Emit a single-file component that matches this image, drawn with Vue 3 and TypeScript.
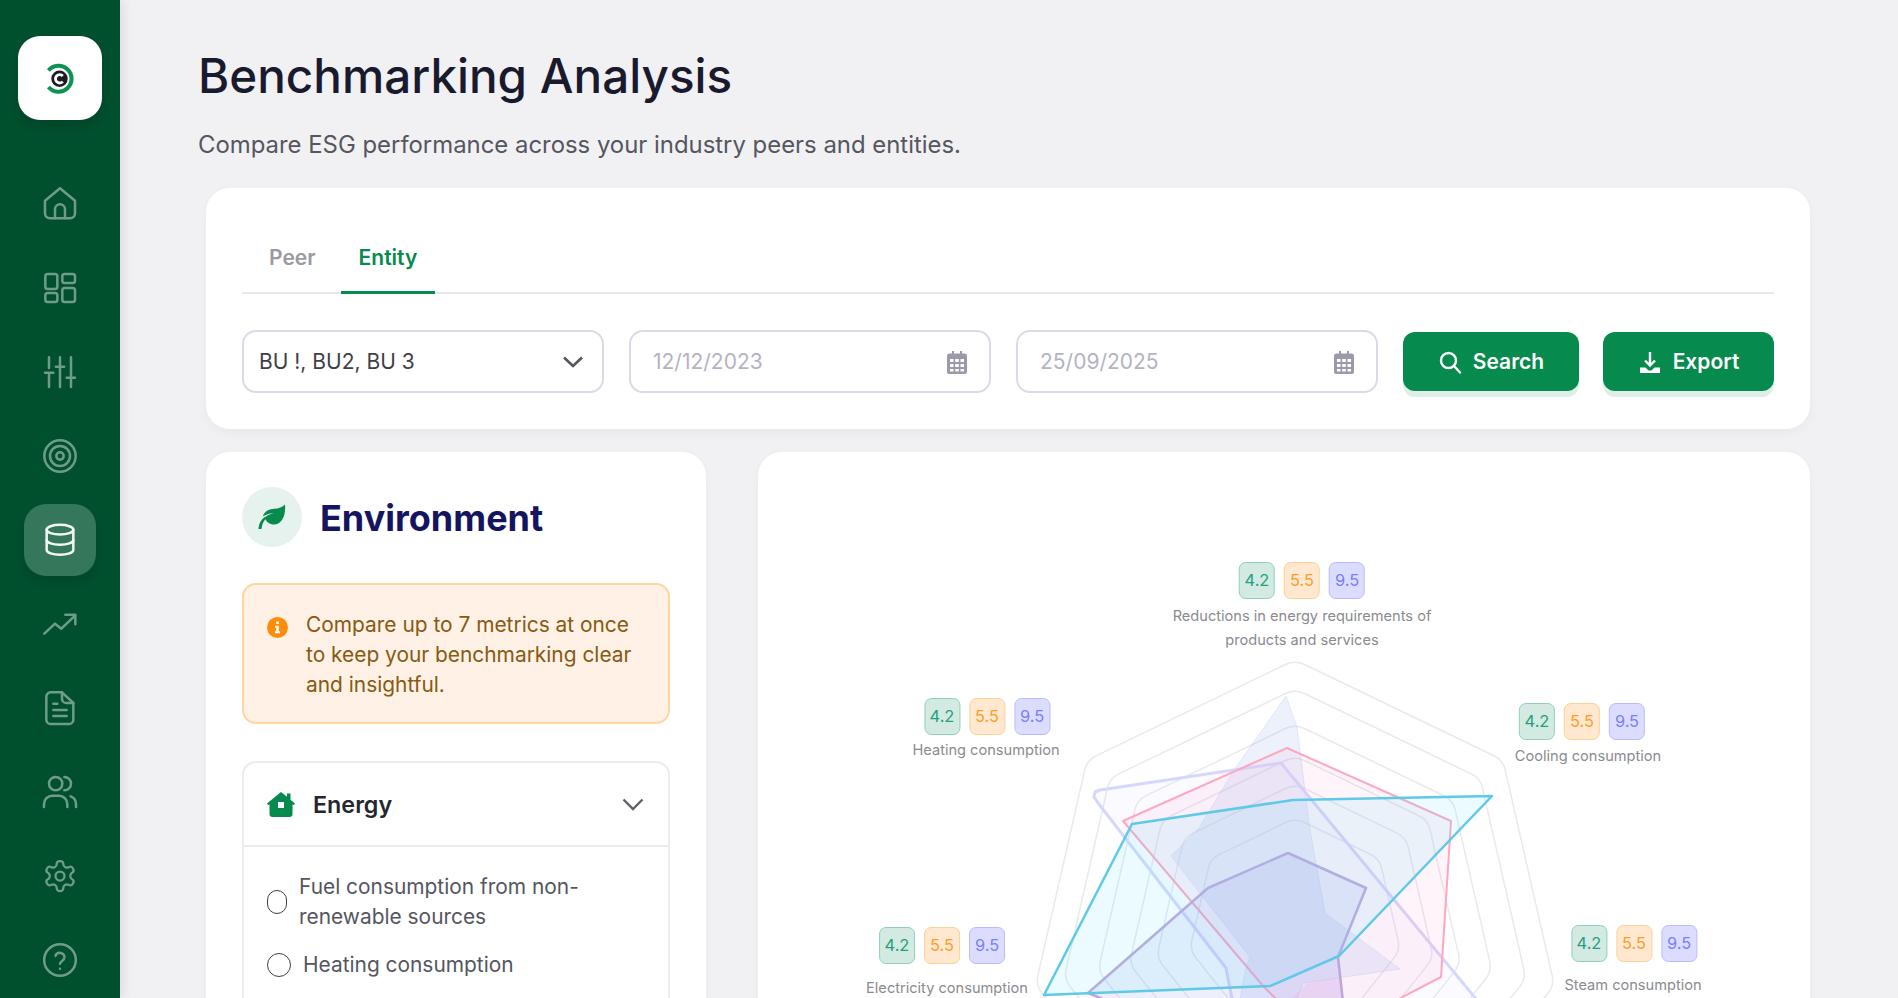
<script setup lang="ts">
interface NavItem {
  id: string
  active?: boolean
  shapes: string
}

const navItems: NavItem[] = [
  { id: 'home', shapes: '<path d="M3 10 12 2.600 21 10v7.600a3 3 0 0 1-3 3H6a3 3 0 0 1-3-3z"/><path d="M9 20.600v-5.400a3 3 0 0 1 6 0v5.400"/>' },
  { id: 'grid', shapes: '<rect x="3.2" y="3.600" width="7.200" height="9" rx="1.400"/><rect x="13.400" y="3.600" width="7.600" height="5.400" rx="1.400"/><rect x="3.200" y="15" width="7.200" height="5.400" rx="1.400"/><rect x="13.400" y="12" width="7.600" height="8.400" rx="1.400"/>' },
  { id: 'sliders', shapes: '<path d="M5.400 3.200v6.400M5.400 12.400V21M12 3.200V8.400M12 8.800V21M18.600 3.200V15.200M18.600 15.400V21M3 12.400h5M9.500 8.800h5M16 15.400h5"/>' },
  { id: 'target', shapes: '<circle cx="12" cy="12" r="9.400"/><circle cx="12" cy="12" r="6"/><circle cx="12" cy="12" r="2.200"/>' },
  { id: 'database', active: true, shapes: '<ellipse cx="12" cy="5.800" rx="8" ry="2.900"/><path d="M4 5.800V18c0 1.600 3.600 2.900 8 2.900s8-1.300 8-2.900V5.800"/><path d="M4 12c0 1.600 3.600 2.900 8 2.900s8-1.300 8-2.900"/>' },
  { id: 'trend', shapes: '<path d="M2.600 17.800 9 11.800l3.800 3L21 7"/><path d="M15.200 6.400h6v5.800"/>' },
  { id: 'doc', shapes: '<path d="M6.400 2.600h6.800L20 9v10a2.600 2.600 0 0 1-2.600 2.600H6.400A2.600 2.600 0 0 1 3.800 19V5.200a2.600 2.600 0 0 1 2.600-2.600z"/><path d="M13.200 2.600v3.800A2.600 2.600 0 0 0 15.800 9H20M8 9.400h2.400M8 13.200h8M8 16.800h8"/>' },
  { id: 'users', shapes: '<circle cx="9.400" cy="7" r="4"/><path d="M2.400 21v-1.800a5 5 0 0 1 5-5h4a5 5 0 0 1 5 5V21"/><path d="M14.600 3a4 4 0 0 1 0 8M18.400 14.600a5 5 0 0 1 3.200 4.600V21"/>' },
  { id: 'gear', shapes: '<g transform="translate(1.200 1.200) scale(.9)"><path d="M12.220 2h-.44a2 2 0 0 0-2 2v.18a2 2 0 0 1-1 1.730l-.43.25a2 2 0 0 1-2 0l-.15-.08a2 2 0 0 0-2.730.73l-.22.38a2 2 0 0 0 .73 2.730l.15.1a2 2 0 0 1 1 1.720v.51a2 2 0 0 1-1 1.740l-.15.09a2 2 0 0 0-.73 2.730l.22.38a2 2 0 0 0 2.730.73l.15-.08a2 2 0 0 1 2 0l.43.25a2 2 0 0 1 1 1.730V20a2 2 0 0 0 2 2h.44a2 2 0 0 0 2-2v-.18a2 2 0 0 1 1-1.730l.43-.25a2 2 0 0 1 2 0l.15.08a2 2 0 0 0 2.730-.73l.22-.39a2 2 0 0 0-.73-2.730l-.15-.08a2 2 0 0 1-1-1.740v-.5a2 2 0 0 1 1-1.740l.15-.09a2 2 0 0 0 .73-2.730l-.22-.38a2 2 0 0 0-2.730-.73l-.15.08a2 2 0 0 1-2 0l-.43-.25a2 2 0 0 1-1-1.730V4a2 2 0 0 0-2-2z"/><circle cx="12" cy="12" r="3"/></g>' },
  { id: 'help', shapes: '<circle cx="12" cy="12" r="9.500"/><path d="M9.300 9.500a2.800 2.800 0 0 1 5.400 1c0 1.800-2.700 2.300-2.700 3.800"/><path d="M12 17.200v.1"/>' },
]

interface RadarLabel {
  id: string
  lines: string[]
  x: number
  y: number
  gap: number
  shift?: number
}

// offsets are relative to the chart card, they are the nodes' place on the diagram
const labels: RadarLabel[] = [
  { id: 'top', lines: ['Reductions in energy requirements of', 'products and services'], x: 544, y: 110, gap: 5 },
  { id: 'heat', lines: ['Heating consumption'], x: 228, y: 246, gap: 3, shift: 1 },
  { id: 'cool', lines: ['Cooling consumption'], x: 830, y: 251, gap: 4, shift: -6 },
  { id: 'elec', lines: ['Electricity consumption'], x: 189, y: 475, gap: 12, shift: -5 },
  { id: 'steam', lines: ['Steam consumption'], x: 875, y: 473, gap: 11, shift: 1 },
]
const scores = [
  { value: '4.2', tone: 'green' },
  { value: '5.5', tone: 'orange' },
  { value: '9.5', tone: 'violet' },
]

const cx = 537
const cy = 474
const ringRadii = [266, 237, 202, 170, 142, 108]
const cornerCut = 10

function ringPath(r: number): string {
  const corners = Array.from({ length: 7 }, (_, i) => {
    const a = (i * 2 * Math.PI) / 7
    return [cx + r * Math.sin(a), cy - r * Math.cos(a)]
  })
  const t = cornerCut / (2 * r * Math.sin(Math.PI / 7))
  let d = ''
  corners.forEach((p, i) => {
    const prev = corners[(i + 6) % 7]
    const next = corners[(i + 1) % 7]
    const a = [p[0] + (prev[0] - p[0]) * t, p[1] + (prev[1] - p[1]) * t]
    const b = [p[0] + (next[0] - p[0]) * t, p[1] + (next[1] - p[1]) * t]
    d += `${i === 0 ? 'M' : 'L'}${a[0].toFixed(1)} ${a[1].toFixed(1)}Q${p[0].toFixed(1)} ${p[1].toFixed(1)} ${b[0].toFixed(1)} ${b[1].toFixed(1)}`
  })
  return d + 'Z'
}

const rings = ringRadii.map(ringPath)

// series given in page coordinates, shifted into the card
function pts(list: number[][]): string {
  return list.map(([x, y]) => `${x - 758},${y - 452}`).join(' ')
}

const series = [
  { id: 'blue', points: pts([[1286, 696], [1297, 727], [1310, 830], [1325, 913], [1400, 969], [1303, 983], [1293, 1010], [1238, 1010], [1246, 967], [1250, 957], [1171, 856], [1199, 828], [1234, 770]]), fill: 'rgba(150, 180, 240, 0.18)', stroke: 'rgba(190, 210, 245, 0.4)', width: 1 },
  { id: 'magenta', points: pts([[1307, 983], [1341, 977], [1344, 1010], [1280, 1010]]), fill: 'rgba(250, 190, 240, 0.3)', stroke: 'none', width: 0 },
  { id: 'peri', points: pts([[1281, 763], [1100, 790], [1095, 792], [1094, 797], [1098, 803], [1226, 968], [1240, 1040], [1510, 1040]]), fill: 'rgba(200, 200, 255, 0.08)', stroke: '#d5d7ff', width: 3 },
  { id: 'pink', points: pts([[1287, 748], [1451, 821], [1441, 977], [1370, 1014], [1300, 1022], [1264, 987], [1123, 821]]), fill: 'rgba(255, 130, 190, 0.09)', stroke: '#ffa6c0', width: 2 },
  { id: 'purple', points: pts([[1288, 853], [1366, 888], [1338, 957], [1345, 1020], [1130, 1010], [1088, 993], [1208, 888]]), fill: 'rgba(125, 130, 235, 0.13)', stroke: '#bda6da', width: 2.5 },
  { id: 'cyan', points: pts([[1293, 800], [1492, 796], [1339, 956], [1270, 986], [1044, 995], [1132, 824]]), fill: 'rgba(110, 225, 255, 0.14)', stroke: '#5fc9e8', width: 2.5 },
]
</script>

<template>
  <div class="page">
    <aside class="sidebar">
      <div class="logo">
        <svg width="36" height="36" viewBox="0 0 36 36" fill="none">
          <path d="M6.500 10.500A13 13 0 1 1 6.500 27" stroke="#0b9354" stroke-width="4" />
          <circle cx="17.500" cy="18.800" r="8.200" fill="#1b1b22" />
          <path d="M20.800 16a4.200 4.200 0 1 0 0 5.600" stroke="#fff" stroke-width="2.800" />
        </svg>
      </div>
      <nav class="nav">
        <div v-for="item in navItems" :key="item.id" class="nav-item" :class="{ active: item.active }">
          <svg width="40" height="40" viewBox="0 0 24 24" fill="none" stroke="currentColor" stroke-width="1.500" stroke-linecap="round" stroke-linejoin="round" v-html="item.shapes" />
        </div>
      </nav>
    </aside>

    <main class="main">
      <header class="head">
        <h1>Benchmarking Analysis</h1>
        <p>Compare ESG performance across your industry peers and entities.</p>
      </header>

      <section class="card filters">
        <div class="tabs">
          <span class="tab">Peer</span>
          <span class="tab on">Entity</span>
        </div>
        <div class="row">
          <div class="field select">
            <span class="val">BU !, BU2, BU 3</span>
            <svg width="22" height="14" viewBox="0 0 22 14" fill="none" stroke="#55565f" stroke-width="2.600"><path d="M2 2.500 11 11l9-8.500" /></svg>
          </div>
          <div v-for="d in ['12/12/2023', '25/09/2025']" :key="d" class="field">
            <span class="val muted">{{ d }}</span>
            <svg width="22" height="24" viewBox="0 0 22 24">
              <path fill="#9a9aa8" fill-rule="evenodd" d="M6 1h2v2.500h6V1h2v2.500h2.500A2.500 2.500 0 0 1 21 6v15.500a2.500 2.500 0 0 1-2.500 2.500h-15A2.500 2.500 0 0 1 1 21.500V6a2.500 2.500 0 0 1 2.500-2.500H6zM4 9v3h3.500V9zm5.200 0v3h3.600V9zm5.300 0v3H18V9zM4 14v3h3.500v-3zm5.200 0v3h3.600v-3zm5.300 0v3H18v-3zM4 19v2.500h3.500V19zm5.200 0v2.500h3.600V19zm5.300 0v2.500H18V19z" />
            </svg>
          </div>
          <button class="btn search">
            <svg width="24" height="24" viewBox="0 0 24 24" fill="none" stroke="#fff" stroke-width="2.400" stroke-linecap="round"><circle cx="10.500" cy="10.500" r="7.500" /><path d="m16 16 6 6.500" /></svg>
            Search
          </button>
          <button class="btn export">
            <svg width="24" height="24" viewBox="0 0 24 24" fill="none"><path d="M12 2v13M7 10.500l5 5 5-5" stroke="#fff" stroke-width="2.400" /><path d="M2 17.500h5.500l3 3h3l3-3H22V23H2z" fill="#fff" /></svg>
            Export
          </button>
        </div>
      </section>

      <div class="lower">
        <section class="card env">
          <div class="env-head">
            <span class="leaf">
              <svg width="30" height="26" viewBox="0 0 30 26">
                <path fill="#068a4d" d="M28 .5c-2.500 2.800-6 4-11 4.300C11 5.200 7 8 6 12.500c2.500-2 6-3.300 11-3.300-4.500.6-7.500 2.200-9.200 5 1.700 3.800 5 6.300 9.200 6.300C24.500 20.500 29 12 28 .5z" />
                <path fill="#068a4d" d="M8.500 12.500C4.500 15 2 19 1.500 25h3C5 20.500 6.500 17 8.800 14.800z" />
              </svg>
            </span>
            <h2>Environment</h2>
          </div>
          <div class="alert">
            <svg class="alert-icon" width="21" height="21" viewBox="0 0 21 21"><circle cx="10.500" cy="10.500" r="10.500" fill="#ff8c0a" /><path fill="#fff" d="M9.200 4.500h2.600v2.400H9.200zM8 8.800h3.800v5.400H13v2H8v-2h1.200v-3.400H8z" /></svg>
            <p>Compare up to 7 metrics at once to keep your benchmarking clear and insightful.</p>
          </div>
          <div class="acc">
            <div class="acc-head">
              <svg width="28" height="25" viewBox="0 0 28 25"><path fill="#068a4d" fill-rule="evenodd" d="M14 0l6 4.800V1.500h3.500v6.200L28 11.500l-1.200 1.800-1.300-1V22a3 3 0 0 1-3 3h-17a3 3 0 0 1-3-3v-9.700l-1.300 1L0 11.500zM11 10v6h6v-6z" /></svg>
              <span class="acc-title">Energy</span>
              <svg width="22" height="13" viewBox="0 0 22 13" fill="none" stroke="#60616b" stroke-width="2.400"><path d="M1.500 1.500 11 11l9.500-9.500" /></svg>
            </div>
            <div class="acc-body">
              <label class="opt">
                <span class="radio squeezed" />
                <span>Fuel consumption from non-<br />renewable sources</span>
              </label>
              <label class="opt">
                <span class="radio" />
                <span>Heating consumption</span>
              </label>
            </div>
          </div>
        </section>

        <section class="card chart">
          <svg class="radar" width="1052" height="546" viewBox="0 0 1052 546">
            <path v-for="(d, i) in rings" :key="i" :d="d" fill="none" stroke="#e9e9ee" stroke-width="1.500" />
            <polygon v-for="s in series" :key="s.id" :points="s.points" :fill="s.fill" :stroke="s.stroke" :stroke-width="s.width" stroke-linejoin="round" />
          </svg>
          <div v-for="l in labels" :key="l.id" class="node" :style="{ left: l.x + 'px', top: l.y + 'px' }">
            <div class="scores" :style="{ transform: `translateX(${l.shift ?? 0}px)` }">
              <span v-for="s in scores" :key="s.tone" class="score" :class="s.tone">{{ s.value }}</span>
            </div>
            <div class="node-text" :style="{ marginTop: l.gap + 'px' }">
              <div v-for="line in l.lines" :key="line">{{ line }}</div>
            </div>
          </div>
        </section>
      </div>
    </main>
  </div>
</template>

<style>
html,
body {
  margin: 0;
  background: #f1f1f4;
}
</style>

<style scoped>
.page {
  display: flex;
  width: 1898px;
  height: 998px;
  overflow: hidden;
  font-family: Inter, "Noto Sans", sans-serif;
  background: #f1f1f4;
}

.sidebar {
  flex: 0 0 120px;
  box-sizing: border-box;
  height: 998px;
  padding-top: 36px;
  background: #00502e;
  box-shadow: 4px 0 10px rgba(0, 0, 0, 0.08);
  display: flex;
  flex-direction: column;
  align-items: center;
  z-index: 1;
}
.logo {
  width: 84px;
  height: 84px;
  border-radius: 22px;
  background: #fff;
  display: flex;
  align-items: center;
  justify-content: center;
  box-shadow: 0 6px 14px rgba(0, 0, 0, 0.14);
}
.nav {
  margin-top: 48px;
  display: flex;
  flex-direction: column;
  gap: 12px;
}
.nav-item {
  width: 72px;
  height: 72px;
  border-radius: 22px;
  display: flex;
  align-items: center;
  justify-content: center;
  color: #6f9c88;
}
.nav-item.active {
  background: #34775b;
  color: #f2f6f4;
  box-shadow: 0 6px 14px rgba(0, 0, 0, 0.12);
}

.main {
  flex: 1;
  min-width: 0;
}
.head {
  padding: 47px 0 0 78px;
  height: 188px;
  box-sizing: border-box;
}
.head h1 {
  margin: 0;
  font-size: 47.6px;
  line-height: 58px;
  font-weight: 500;
  color: #1a1a2e;
}
.head p {
  margin: 25px 0 0;
  font-size: 23.9px;
  line-height: 30px;
  color: #55565f;
}

.card {
  background: #fff;
  border-radius: 24px;
  box-shadow: 0 4px 12px rgba(20, 20, 40, 0.04);
}
.filters {
  margin: 0 88px 0 86px;
  height: 241px;
  box-sizing: border-box;
  padding: 0 36px;
}
.tabs {
  height: 106px;
  box-sizing: border-box;
  padding-left: 9px;
  display: flex;
  align-items: flex-end;
  gap: 7px;
  border-bottom: 2px solid #e7e7ec;
}
.tab {
  padding: 0 18px 10px;
  margin-bottom: -2px;
  font-size: 21px;
  line-height: 46px;
  font-weight: 600;
  color: #9a9aa0;
  border-bottom: 3px solid transparent;
}
.tab.on {
  color: #068a4d;
  border-bottom-color: #068a4d;
}
.row {
  margin-top: 36px;
  display: flex;
  align-items: center;
}
.field {
  width: 362px;
  height: 63px;
  box-sizing: border-box;
  margin-right: 25px;
  padding: 0 21px 0 22px;
  border: 2px solid #dcdae6;
  border-radius: 14px;
  display: flex;
  align-items: center;
  justify-content: space-between;
}
.field.select {
  padding: 0 18px 0 15px;
}
.val {
  font-size: 21px;
  color: #3e3f48;
}
.val.muted {
  color: #b4b3c4;
}
.btn {
  height: 59px;
  border: 0;
  border-radius: 12px;
  background: #068a4d;
  color: #fff;
  font-family: inherit;
  font-size: 21px;
  font-weight: 600;
  display: flex;
  align-items: center;
  justify-content: center;
  gap: 11px;
  box-shadow: 0 6px 0 #deefe8;
}
.btn.search {
  width: 176px;
  margin-right: 24px;
}
.btn.export {
  width: 171px;
}

.lower {
  margin: 23px 88px 0 86px;
  display: flex;
  gap: 52px;
}
.env {
  flex: 0 0 500px;
  height: 600px;
  box-sizing: border-box;
  padding: 35px 36px 0;
}
.env-head {
  display: flex;
  align-items: center;
  gap: 18px;
}
.leaf {
  width: 60px;
  height: 60px;
  border-radius: 50%;
  background: #e5f2ed;
  display: flex;
  align-items: center;
  justify-content: center;
}
.env-head h2 {
  margin: 2px 0 0;
  font-size: 36px;
  font-weight: 700;
  color: #14145f;
}
.alert {
  margin-top: 36px;
  height: 141px;
  box-sizing: border-box;
  padding: 25px 23px 0;
  border: 2px solid #ffd69f;
  border-radius: 14px;
  background: #fff1e5;
  display: flex;
  gap: 18px;
  color: #875a12;
}
.alert-icon {
  flex: none;
  margin-top: 7px;
}
.alert p {
  margin: 0;
  font-size: 20.9px;
  line-height: 30px;
}
.acc {
  margin-top: 37px;
  height: 400px;
  border: 2px solid #ebebf0;
  border-radius: 14px;
}
.acc-head {
  height: 84px;
  box-sizing: border-box;
  padding: 0 24px 0 23px;
  border-bottom: 2px solid #ebebf0;
  display: flex;
  align-items: center;
}
.acc-title {
  flex: 1;
  margin-left: 18px;
  font-size: 23.3px;
  font-weight: 600;
  color: #25262f;
}
.acc-body {
  padding: 25px 23px 0;
}
.opt {
  display: flex;
  align-items: center;
  gap: 12px;
  font-size: 20.9px;
  line-height: 30px;
  color: #55565f;
  margin-bottom: 18px;
}
.radio {
  flex: none;
  width: 22px;
  height: 22px;
  border: 1.500px solid #3e3f48;
  border-radius: 50%;
}
.radio.squeezed {
  width: 18px;
  border-radius: 10px;
}

.chart {
  flex: 1;
  position: relative;
  height: 600px;
  overflow: hidden;
}
.radar {
  position: absolute;
  left: 0;
  top: 0;
}
.node {
  position: absolute;
  transform: translateX(-50%);
  white-space: nowrap;
  text-align: center;
}
.scores {
  display: flex;
  justify-content: center;
  gap: 9px;
}
.score {
  width: 36px;
  height: 37px;
  box-sizing: border-box;
  border: 1.500px solid;
  border-radius: 7px;
  font-size: 16.4px;
  line-height: 34px;
}
.score.green {
  color: #25a07c;
  border-color: #8fd0bb;
  background: #d3eae3;
}
.score.orange {
  color: #fb9d2c;
  border-color: #fdd094;
  background: #ffe8cf;
}
.score.violet {
  color: #7a7ffa;
  border-color: #b9bcfc;
  background: #dcddfe;
}
.node-text {
  font-size: 14.6px;
  line-height: 24px;
  color: #8a8a90;
}
</style>
